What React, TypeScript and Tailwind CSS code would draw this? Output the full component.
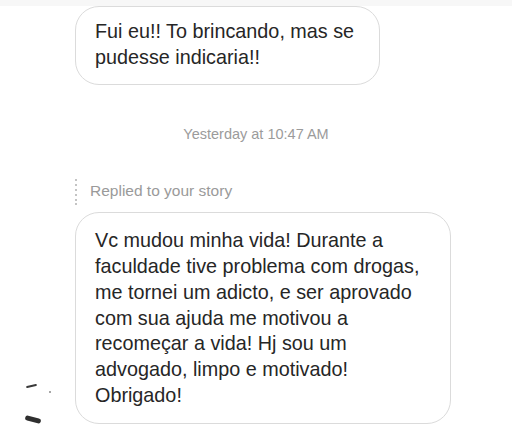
const firstMessage = ['Fui eu!! To brincando, mas se', 'pudesse indicaria!!'];

const secondMessage = [
  'Vc mudou minha vida! Durante a',
  'faculdade tive problema com drogas,',
  'me tornei um adicto, e ser aprovado',
  'com sua ajuda me motivou a',
  'recomeçar a vida! Hj sou um',
  'advogado, limpo e motivado!',
  'Obrigado!',
];

function Bubble({ lines, className }: { lines: string[]; className: string }) {
  return (
    <div className={`rounded-[24px] border border-[#dbdbdb] px-[19px] text-[19.8px] leading-[25.7px] whitespace-nowrap ${className}`}>
      {lines.map((line) => (
        <div key={line}>{line}</div>
      ))}
    </div>
  );
}

export default function App() {
  const font = { fontFamily: '"Liberation Sans", Arial, sans-serif' };
  return (
    <div className="relative w-[512px] h-[434px] overflow-hidden bg-white text-[#262626]" style={font}>
      <div className="h-[6px] bg-[#f7f7f7]" />
      <div className="pl-[75px]">
        <Bubble lines={firstMessage} className="w-[305px] pt-[12px] pb-[14px]" />
      </div>
      <div className="mt-[41px] text-center text-[14.5px] leading-[17px] text-[#9b9b9b]">Yesterday at 10:47 AM</div>
      <div className="mt-[36px] flex items-start pl-[75px]">
        <div className="flex h-[26px] flex-col justify-between">
          {[0, 1, 2, 3, 4, 5].map((i) => (
            <span key={i} className="block h-[2px] w-[2px] rounded-full bg-[#b0b0b0]" />
          ))}
        </div>
        <span className="ml-[13px] pt-[3px] text-[15.5px] leading-[18px] text-[#9a9a9a]">Replied to your story</span>
      </div>
      <div className="mt-[7px] pl-[75px]">
        <Bubble lines={secondMessage} className="w-[376px] pt-[15px] pb-[15px]" />
      </div>
      <div className="absolute left-[26px] top-[385px] h-[2px] w-[11px] rotate-[-14deg] rounded-full bg-[#3a3a3a]" />
      <div className="absolute left-[49px] top-[391px] h-[2px] w-[2px] rounded-full bg-[#8a8a8a]" />
      <div className="absolute left-[25px] top-[417px] h-[5px] w-[16px] rotate-[14deg] rounded-full bg-[#2f2f2f]" />
    </div>
  );
}
